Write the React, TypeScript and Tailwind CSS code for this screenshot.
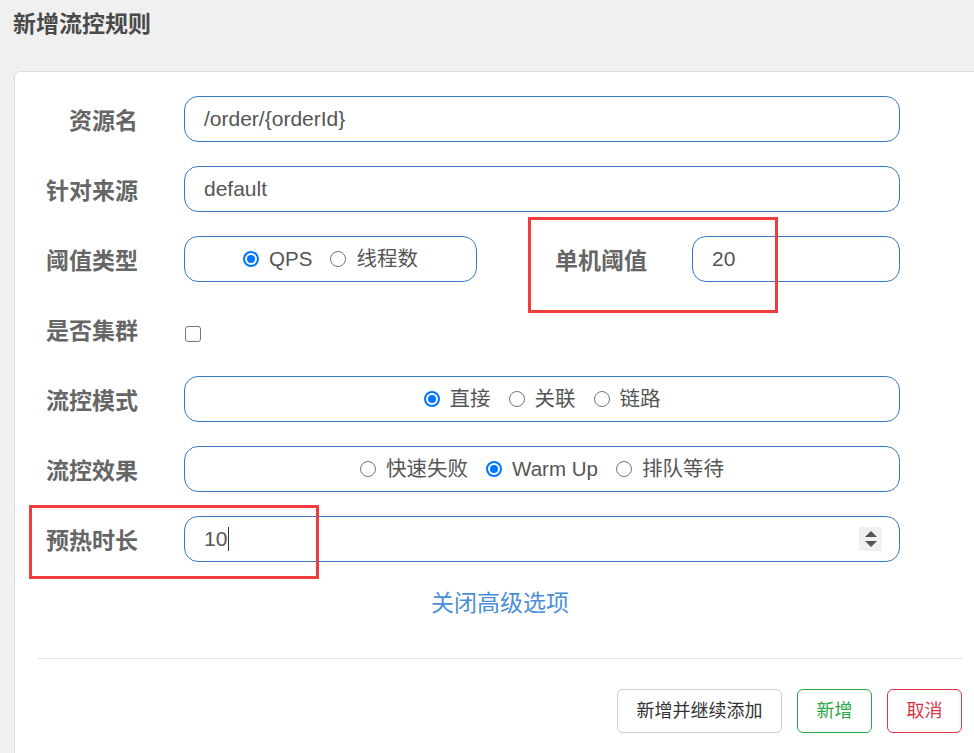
const FONT = { fontFamily: '"Liberation Sans", "Noto Sans CJK SC", sans-serif' };

function Label({ text, width = "w-[100px]" }: { text: string; width?: string }) {
  return (
    <div className={`${width} shrink-0 pt-[10px] text-right text-[23px] font-bold leading-[30px] text-[#666]`}>
      {text}
    </div>
  );
}

function Radio({ label, checked = false }: { label: string; checked?: boolean }) {
  return (
    <span className="mr-[18px] flex items-center last:mr-0">
      {checked ? (
        <span className="flex h-4 w-4 items-center justify-center rounded-full border-2 border-[#0075ff] bg-white">
          <span className="h-[8px] w-[8px] rounded-full bg-[#0075ff]" />
        </span>
      ) : (
        <span className="h-4 w-4 rounded-full border-[1.5px] border-[#767676] bg-white" />
      )}
      <span className="ml-[10px] text-[20.5px] text-[#555]">{label}</span>
    </span>
  );
}

function Box({ children, className = "" }: { children: React.ReactNode; className?: string }) {
  return (
    <div
      className={`flex h-[46px] items-center rounded-[14px] border border-[#3778c2] bg-white px-[19px] text-[21px] text-[#555] ${className}`}
    >
      {children}
    </div>
  );
}

export default function App() {
  return (
    <div style={FONT} className="relative h-[753px] w-full overflow-hidden bg-[#f0f0f0]">
      <div className="h-[71px] pl-[13px] pt-[9px]">
        <h2 className="text-[23px] font-bold leading-[30px] text-[#4a4a4a]">新增流控规则</h2>
      </div>

      <div className="ml-[14px] w-[972px] rounded-t-[6px] border border-[#dcdcdc] bg-white px-[23px] pb-[40px] pt-[24px]">
        <div className="flex flex-col gap-6">
          <div className="flex gap-[46px]">
            <Label text="资源名" />
            <Box className="w-[716px]">/order/{"{orderId}"}</Box>
          </div>

          <div className="flex gap-[46px]">
            <Label text="针对来源" />
            <Box className="w-[716px]">default</Box>
          </div>

          <div className="flex">
            <Label text="阈值类型" />
            <Box className="ml-[46px] w-[293px] justify-center">
              <Radio label="QPS" checked />
              <Radio label="线程数" />
            </Box>
            <Label text="单机阈值" width="w-[170px]" />
            <Box className="ml-[45px] w-[208px]">20</Box>
          </div>

          <div className="flex h-[46px] gap-[46px]">
            <Label text="是否集群" />
            <div className="flex h-[46px] items-center pt-[9px]">
              <span className="ml-px h-4 w-4 rounded-[3px] border-[1.5px] border-[#767676] bg-white" />
            </div>
          </div>

          <div className="flex gap-[46px]">
            <Label text="流控模式" />
            <Box className="w-[716px] justify-center">
              <Radio label="直接" checked />
              <Radio label="关联" />
              <Radio label="链路" />
            </Box>
          </div>

          <div className="flex gap-[46px]">
            <Label text="流控效果" />
            <Box className="w-[716px] justify-center">
              <Radio label="快速失败" />
              <Radio label="Warm Up" checked />
              <Radio label="排队等待" />
            </Box>
          </div>

          <div className="flex gap-[46px]">
            <Label text="预热时长" />
            <Box className="w-[716px] justify-between pr-[17px]">
              <span className="flex items-center">
                10
                <span className="ml-px h-[24px] w-px bg-[#333]" />
              </span>
              <span className="flex h-[24px] w-[23px] flex-col items-center justify-center gap-[4px] bg-[#f0f0f0]">
                <svg width="12" height="6" viewBox="0 0 12 6">
                  <path d="M6 0 L12 6 L0 6 Z" fill="#555" />
                </svg>
                <svg width="12" height="6" viewBox="0 0 12 6">
                  <path d="M0 0 L12 0 L6 6 Z" fill="#555" />
                </svg>
              </span>
            </Box>
          </div>
        </div>

        <div className="mt-[26px] text-center">
          <a className="cursor-pointer text-[23px] leading-[30px] text-[#4a8fd4]">关闭高级选项</a>
        </div>

        <div className="mt-[40px] h-px bg-[#e5e5e5]" />

        <div className="mt-[30px] flex justify-end gap-[15px]">
          <button className="h-[44px] w-[165px] rounded-[6px] border border-[#cccccc] bg-white text-[18px] text-[#333]">
            新增并继续添加
          </button>
          <button className="h-[44px] w-[75px] rounded-[6px] border border-[#28a745] bg-white text-[18px] text-[#28a745]">
            新增
          </button>
          <button className="h-[44px] w-[75px] rounded-[6px] border border-[#dc3545] bg-white text-[18px] text-[#dc3545]">
            取消
          </button>
        </div>
      </div>

      {/* annotation boxes */}
      <div className="absolute left-[528px] top-[217px] h-[96px] w-[250px] border-[3px] border-[#f03c3c]" />
      <div className="absolute left-[29px] top-[505px] h-[74px] w-[290px] border-[3px] border-[#f03c3c]" />
    </div>
  );
}
